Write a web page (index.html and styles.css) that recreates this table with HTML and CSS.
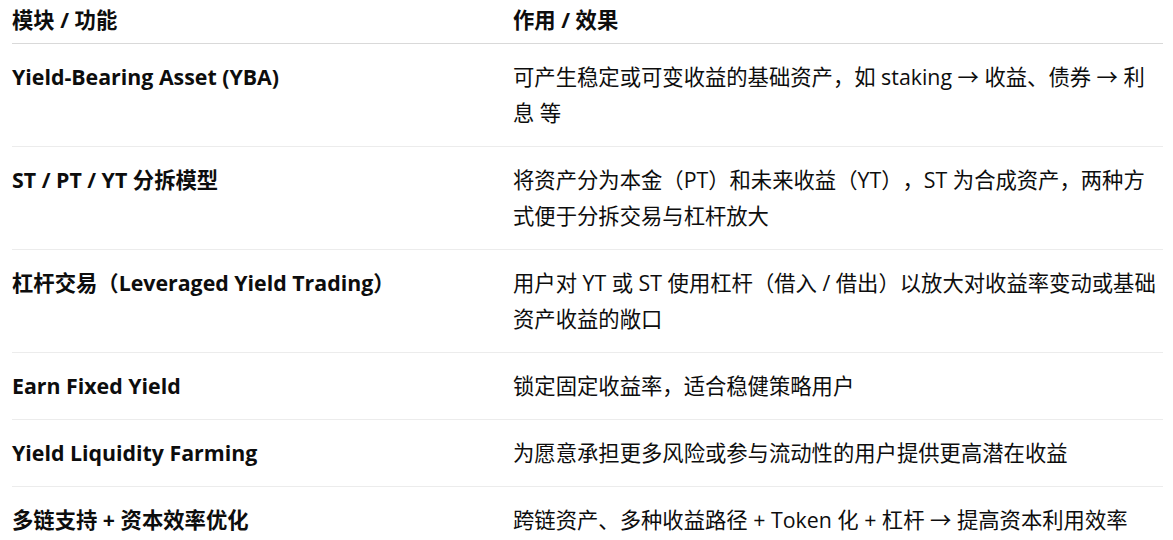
FILE: index.html
```html
<!DOCTYPE html>
<html lang="zh-CN">
<head>
<meta charset="utf-8">
<title>模块 / 功能</title>
<link rel="stylesheet" href="styles.css">
</head>
<body>
<table class="feature-table">
  <thead>
    <tr>
      <th class="col-module">模块 / 功能</th>
      <th class="col-effect">作用 / 效果</th>
    </tr>
  </thead>
  <tbody>
    <tr>
      <td class="name">Yield-Bearing Asset (YBA)</td>
      <td>可产生稳定或可变收益的基础资产，如 staking → 收益、债券 → 利息 等</td>
    </tr>
    <tr>
      <td class="name">ST / PT / YT 分拆模型</td>
      <td>将资产分为本金（PT）和未来收益（YT），ST 为合成资产，两种方式便于分拆交易与杠杆放大</td>
    </tr>
    <tr>
      <td class="name">杠杆交易（Leveraged Yield Trading）</td>
      <td>用户对 YT 或 ST 使用杠杆（借入 / 借出）以放大对收益率变动或基础资产收益的敞口</td>
    </tr>
    <tr>
      <td class="name">Earn Fixed Yield</td>
      <td>锁定固定收益率，适合稳健策略用户</td>
    </tr>
    <tr>
      <td class="name">Yield Liquidity Farming</td>
      <td>为愿意承担更多风险或参与流动性的用户提供更高潜在收益</td>
    </tr>
    <tr>
      <td class="name">多链支持 + 资本效率优化</td>
      <td>跨链资产、多种收益路径 + Token 化 + 杠杆 → 提高资本利用效率</td>
    </tr>
  </tbody>
</table>
</body>
</html>
```
FILE: styles.css
```css
html, body {
  margin: 0;
  padding: 0;
  background: #ffffff;
}

body {
  padding: 0 10px 0 12px;
  font-family: "Open Sans", "Noto Sans CJK SC", sans-serif;
  font-size: 21.33px;
  line-height: 36px;
  color: #0d0d0d;
  text-spacing-trim: space-all;
}

.feature-table {
  width: 100%;
  border-collapse: collapse;
  table-layout: fixed;
}

.col-module {
  width: 493px;
  padding-right: 8px !important;
}

.feature-table th {
  text-align: left;
  font-weight: 700;
  padding: 2px 0 5px 0;
  border-bottom: 1px solid #d9d9d9;
  vertical-align: top;
}

.feature-table td {
  padding: 15px 0 15px 0;
  border-bottom: 1px solid #ececec;
  vertical-align: top;
  font-weight: 400;
}

.feature-table td.name {
  font-weight: 700;
  padding-right: 8px;
}
```
